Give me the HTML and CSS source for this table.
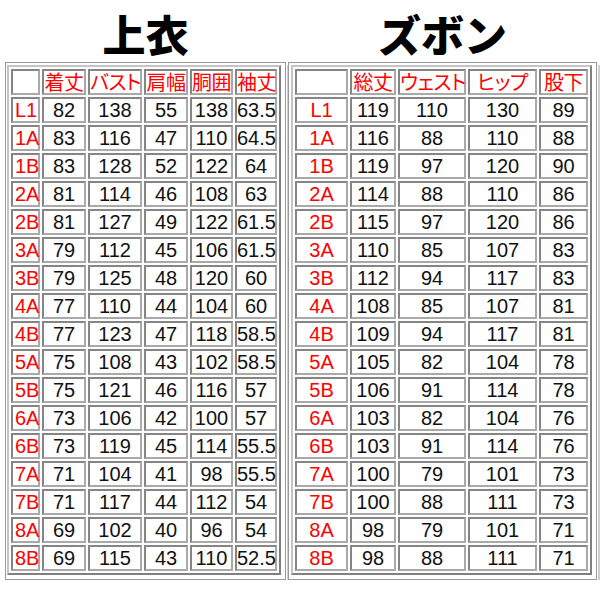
FILE: index.html
```html
<!DOCTYPE html>
<html lang="ja">
<head>
<meta charset="utf-8">
<title>サイズ表</title>
<link rel="stylesheet" href="styles.css">
</head>
<body>
<div class="page">
  <section class="panel panel-top">
    <h1 class="title">上衣</h1>
    <div class="frame frame-top">
      <table class="size size-top">
        <colgroup>
          <col class="c29"><col class="c44"><col class="c54"><col class="c44"><col class="c43"><col class="c42">
        </colgroup>
        <tr><th></th><th>着丈</th><th>バスト</th><th>肩幅</th><th>胴囲</th><th>袖丈</th></tr>
        <tr><td class="lab">L1</td><td>82</td><td>138</td><td>55</td><td>138</td><td>63.5</td></tr>
        <tr><td class="lab">1A</td><td>83</td><td>116</td><td>47</td><td>110</td><td>64.5</td></tr>
        <tr><td class="lab">1B</td><td>83</td><td>128</td><td>52</td><td>122</td><td>64</td></tr>
        <tr><td class="lab">2A</td><td>81</td><td>114</td><td>46</td><td>108</td><td>63</td></tr>
        <tr><td class="lab">2B</td><td>81</td><td>127</td><td>49</td><td>122</td><td>61.5</td></tr>
        <tr><td class="lab">3A</td><td>79</td><td>112</td><td>45</td><td>106</td><td>61.5</td></tr>
        <tr><td class="lab">3B</td><td>79</td><td>125</td><td>48</td><td>120</td><td>60</td></tr>
        <tr><td class="lab">4A</td><td>77</td><td>110</td><td>44</td><td>104</td><td>60</td></tr>
        <tr><td class="lab">4B</td><td>77</td><td>123</td><td>47</td><td>118</td><td>58.5</td></tr>
        <tr><td class="lab">5A</td><td>75</td><td>108</td><td>43</td><td>102</td><td>58.5</td></tr>
        <tr><td class="lab">5B</td><td>75</td><td>121</td><td>46</td><td>116</td><td>57</td></tr>
        <tr><td class="lab">6A</td><td>73</td><td>106</td><td>42</td><td>100</td><td>57</td></tr>
        <tr><td class="lab">6B</td><td>73</td><td>119</td><td>45</td><td>114</td><td>55.5</td></tr>
        <tr><td class="lab">7A</td><td>71</td><td>104</td><td>41</td><td>98</td><td>55.5</td></tr>
        <tr><td class="lab">7B</td><td>71</td><td>117</td><td>44</td><td>112</td><td>54</td></tr>
        <tr><td class="lab">8A</td><td>69</td><td>102</td><td>40</td><td>96</td><td>54</td></tr>
        <tr><td class="lab">8B</td><td>69</td><td>115</td><td>43</td><td>110</td><td>52.5</td></tr>
      </table>
    </div>
  </section>
  <section class="panel panel-bottom">
    <h1 class="title">ズボン</h1>
    <div class="frame frame-bottom">
      <table class="size size-bottom">
        <colgroup>
          <col class="c53"><col class="c46"><col class="c68"><col class="c69"><col class="c49">
        </colgroup>
        <tr><th></th><th>総丈</th><th>ウェスト</th><th>ヒップ</th><th>股下</th></tr>
        <tr><td class="lab">L1</td><td>119</td><td>110</td><td>130</td><td>89</td></tr>
        <tr><td class="lab">1A</td><td>116</td><td>88</td><td>110</td><td>88</td></tr>
        <tr><td class="lab">1B</td><td>119</td><td>97</td><td>120</td><td>90</td></tr>
        <tr><td class="lab">2A</td><td>114</td><td>88</td><td>110</td><td>86</td></tr>
        <tr><td class="lab">2B</td><td>115</td><td>97</td><td>120</td><td>86</td></tr>
        <tr><td class="lab">3A</td><td>110</td><td>85</td><td>107</td><td>83</td></tr>
        <tr><td class="lab">3B</td><td>112</td><td>94</td><td>117</td><td>83</td></tr>
        <tr><td class="lab">4A</td><td>108</td><td>85</td><td>107</td><td>81</td></tr>
        <tr><td class="lab">4B</td><td>109</td><td>94</td><td>117</td><td>81</td></tr>
        <tr><td class="lab">5A</td><td>105</td><td>82</td><td>104</td><td>78</td></tr>
        <tr><td class="lab">5B</td><td>106</td><td>91</td><td>114</td><td>78</td></tr>
        <tr><td class="lab">6A</td><td>103</td><td>82</td><td>104</td><td>76</td></tr>
        <tr><td class="lab">6B</td><td>103</td><td>91</td><td>114</td><td>76</td></tr>
        <tr><td class="lab">7A</td><td>100</td><td>79</td><td>101</td><td>73</td></tr>
        <tr><td class="lab">7B</td><td>100</td><td>88</td><td>111</td><td>73</td></tr>
        <tr><td class="lab">8A</td><td>98</td><td>79</td><td>101</td><td>71</td></tr>
        <tr><td class="lab">8B</td><td>98</td><td>88</td><td>111</td><td>71</td></tr>
      </table>
    </div>
  </section>
</div>
</body>
</html>
```

FILE: styles.css
```css
* { box-sizing: border-box; }

html, body {
  margin: 0;
  padding: 0;
  background: #ffffff;
}

.page {
  display: flex;
  align-items: flex-start;
  gap: 2px;
  padding-left: 5px;
  width: 600px;
}

.panel {
  display: flex;
  flex-direction: column;
}

.panel-top { width: 281px; }
.panel-bottom { width: 309px; }

.title {
  margin: 0;
  height: 62px;
  padding-top: 5px;
  line-height: 57px;
  text-align: center;
  font-family: "Noto Sans CJK JP", "Noto Sans", sans-serif;
  font-weight: 900;
  font-size: 43px;
  color: #000;
}

.frame {
  border: 1px solid #9a9a9a;
  box-shadow: 1px 1px 0 #ffffff, 3px 3px 0 #cfcfcf;
  padding: 2px 3px 4px 1px;
}

.frame-bottom {
  padding: 2px 3px 4px 2px;
}

.size {
  table-layout: fixed;
  border-collapse: separate;
  border-spacing: 2px;
  border-style: solid;
  border-width: 2px;
  border-color: #c4c4c4 #808080 #808080 #c4c4c4;
  background: #ffffff;
}

.size-top { width: 274px; }
.size-bottom { width: 301px; }

.c29 { width: 29px; }
.c42 { width: 42px; }
.c43 { width: 43px; }
.c44 { width: 44px; }
.c46 { width: 46px; }
.c49 { width: 49px; }
.c53 { width: 53px; }
.c54 { width: 54px; }
.c68 { width: 68px; }
.c69 { width: 69px; }

.size th,
.size td {
  height: 26px;
  padding: 0;
  border-style: solid;
  border-width: 2px;
  border-color: #858585 #a9a9a9 #a9a9a9 #858585;
  text-align: center;
  vertical-align: middle;
  white-space: nowrap;
  line-height: 1;
}

.size th {
  font-family: "Noto Sans CJK JP", sans-serif;
  font-feature-settings: "palt";
  font-weight: 400;
  font-size: 20px;
  color: #ff0000;
  letter-spacing: -0.5px;
}

.size td {
  font-family: "Liberation Sans", Arial, sans-serif;
  font-size: 20px;
  color: #111;
}

.size td.lab {
  color: #ff0000;
}

.size-top td.lab {
  text-align: left;
  padding-left: 2px;
}
```
